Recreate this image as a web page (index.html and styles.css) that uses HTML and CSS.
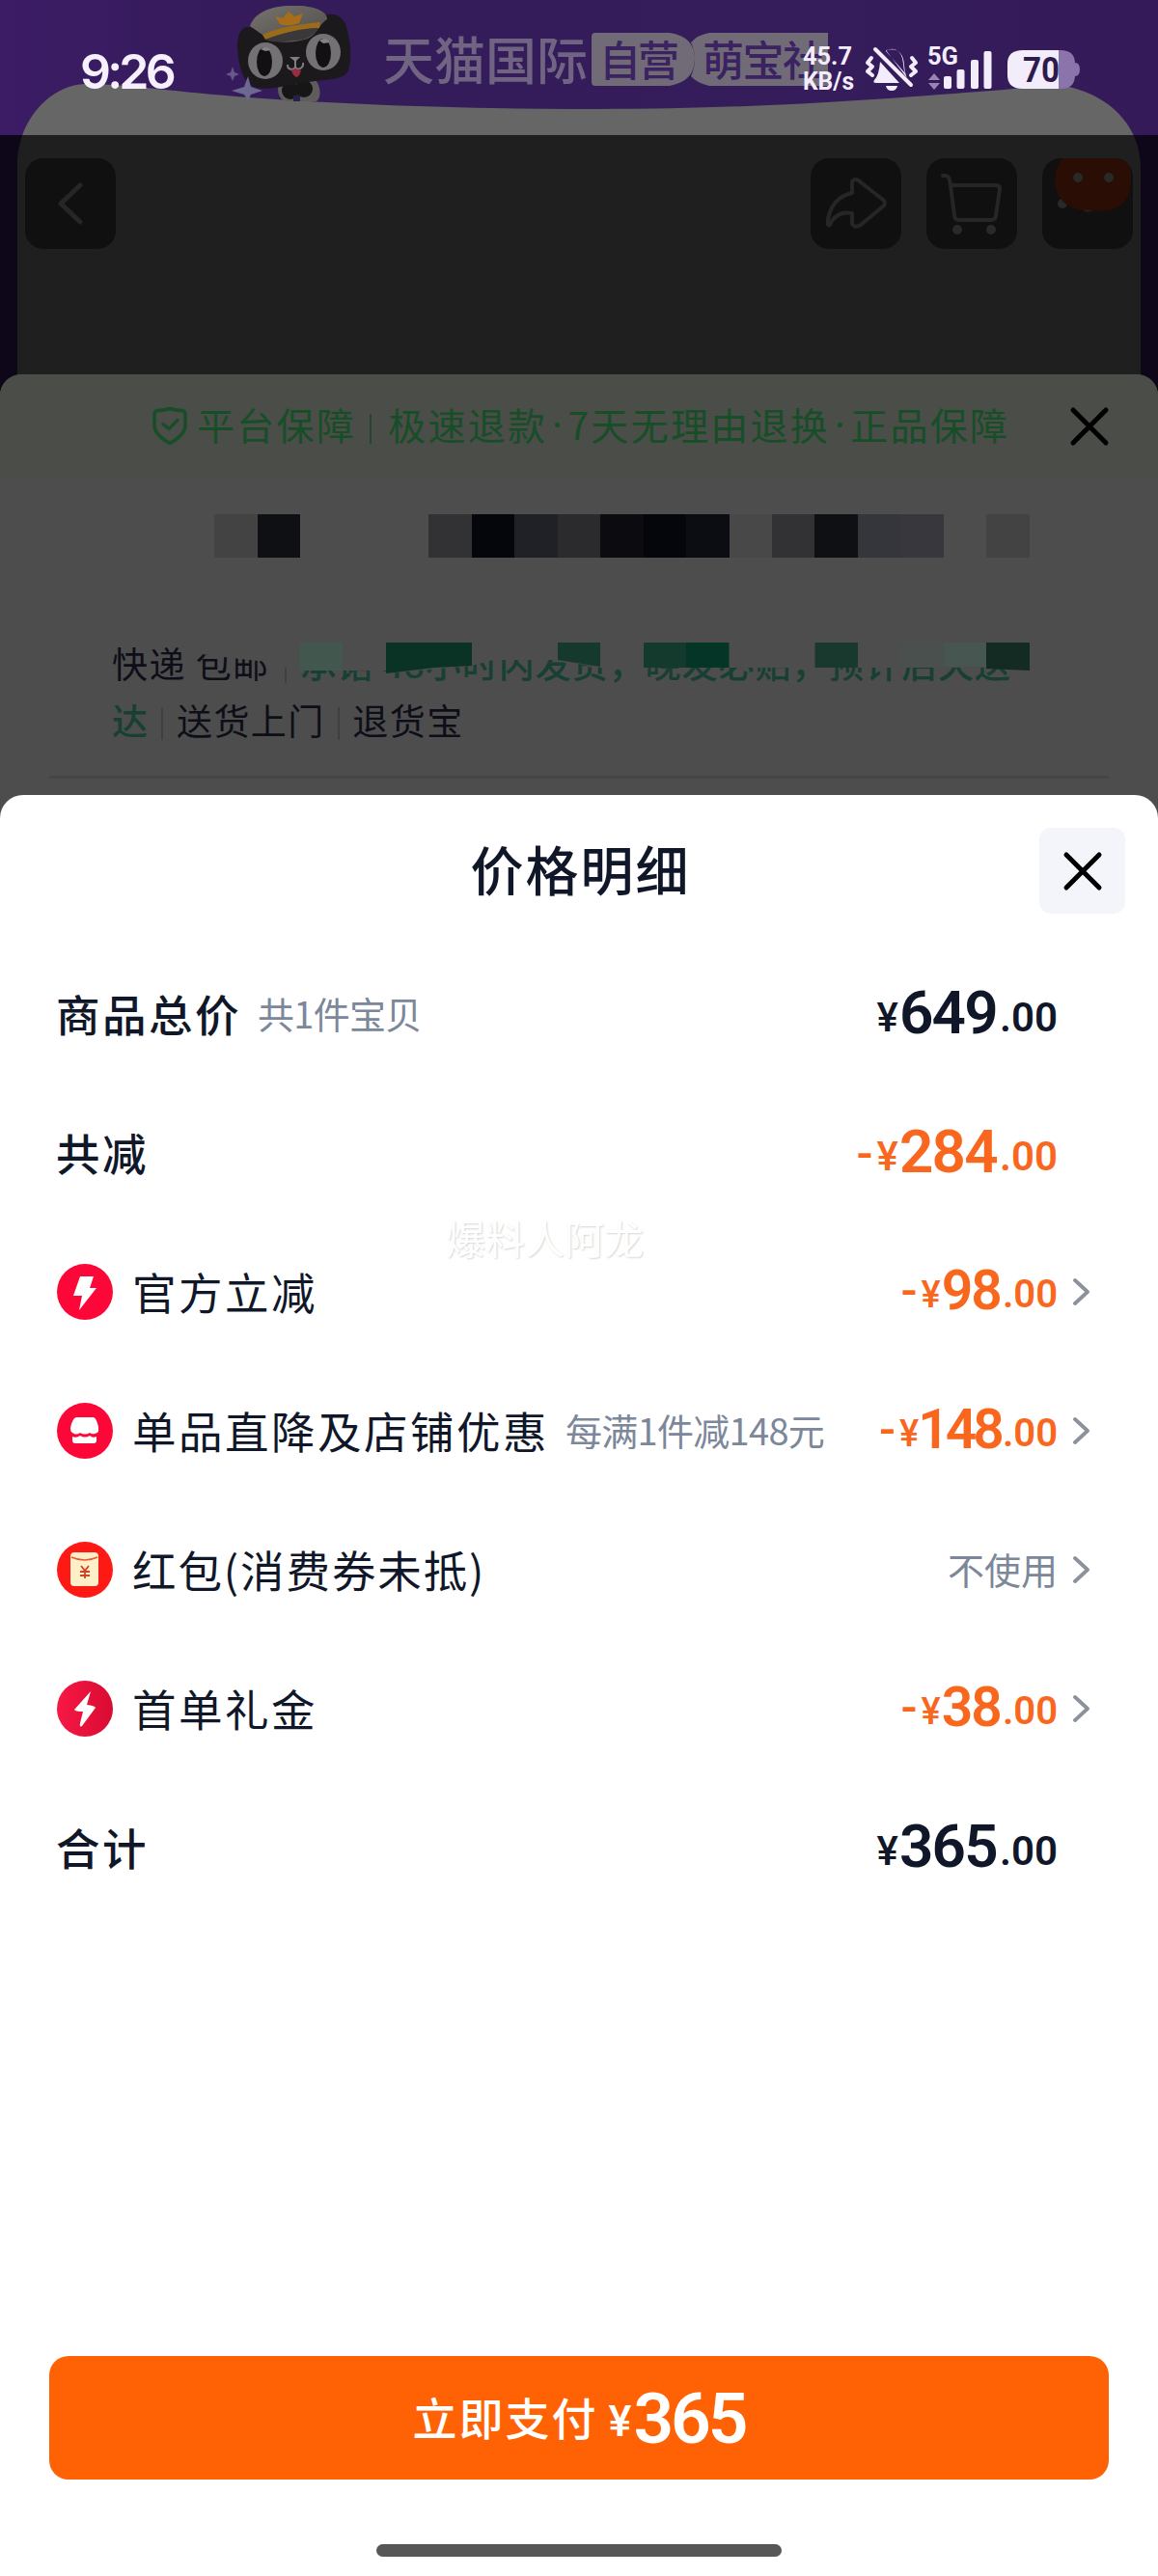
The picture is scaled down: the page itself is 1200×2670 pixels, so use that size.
FILE: index.html
```html
<!DOCTYPE html>
<html lang="zh-CN">
<head>
<meta charset="utf-8">
<meta name="viewport" content="width=1200">
<title>价格明细</title>
<link rel="stylesheet" href="styles.css">
</head>
<body>
<div class="page">
  <header class="hero">
    <svg class="hero-art" viewBox="0 0 1200 420" width="1200" height="420">
      <defs>
        <linearGradient id="purple" x1="0" x2="1"><stop offset="0" stop-color="#3b1c65"/><stop offset=".25" stop-color="#341b59"/><stop offset=".7" stop-color="#351c5b"/><stop offset="1" stop-color="#341a58"/></linearGradient>
        <linearGradient id="hat" x1="0" x2="1" y2="1"><stop offset="0" stop-color="#77736e"/><stop offset="1" stop-color="#4e4b4a"/></linearGradient>
        <clipPath id="top"><rect width="1200" height="140"/></clipPath>
        <clipPath id="low"><rect y="140" width="1200" height="280"/></clipPath>
        <path id="card" d="M18 420V165C20 128 48 89 88 87C130 87 170 94 245 100C350 108 480 113 620 113C790 113 920 102 1040 93C1070 90 1095 88 1108 90C1150 100 1182 130 1182 175V420Z"/>
      </defs>
      <rect width="1200" height="140" fill="url(#purple)"/>
      <rect y="140" width="1200" height="280" fill="#0d0719"/>
      <use href="#card" fill="#666" clip-path="url(#top)"/>
      <use href="#card" fill="#1f1f1f" clip-path="url(#low)"/>
      <g>
        <path d="M290 84C286 92 288 103 296 105H328C334 100 332 88 326 82Z" fill="#5f5d5c"/>
        <circle cx="301" cy="94" r="9" fill="#171617"/><circle cx="315" cy="92" r="9" fill="#171617"/>
        <path d="M304 105V99H311V105Z" fill="#28204a"/>
        <path d="M246 48C246 36 250 27 258 28C266 29 270 36 276 38C296 38 320 32 332 20C340 11 353 14 358 25C364 42 365 65 360 75C354 83 338 82 320 85C300 88 278 94 266 91C250 86 247 65 246 48Z" fill="#1b191b"/>
        <path d="M259 27C264 12 283 5 306 6C324 5 340 12 339 20C330 26 330 34 319 40C304 45 282 46 272 36Z" fill="url(#hat)"/>
        <path d="M272 36C288 28 312 25 332 23L331 29C314 29 292 34 275 41Z" fill="#9b6b17"/>
        <path d="M285 17L293 19L299 12L305 17L314 14L310 24Q299 28 290 25Z" fill="#a86d18"/>
        <path d="M275 41C292 34 314 29 330 29C324 38 315 42 303 42C291 44 281 44 275 41Z" fill="#3a3839"/>
        <ellipse cx="275" cy="63" rx="18" ry="19" fill="#747174"/><ellipse cx="274" cy="64" rx="8" ry="15" fill="#111"/>
        <ellipse cx="335" cy="54" rx="18" ry="19" fill="#747174"/><ellipse cx="335" cy="55" rx="8" ry="15" fill="#111"/>
        <path d="M270 51Q276 46 281 52L275 53ZM331 42Q337 37 342 44L335 45Z" fill="#858285"/>
        <path d="M300 59H311L306 64Z" fill="#817d81"/>
        <path d="M306 62V69M298 67C298 74 306 72 306 69C307 74 315 71 314 65" fill="none" stroke="#817d81" stroke-width="2"/>
        <path d="M302 73Q307 70 312 73Q310 80 307 80Q303 78 302 73Z" fill="#9a2c40"/>
        <path d="M257 79L260 90L272 94L260 98L257 104L253 98L240 94L253 90Z" fill="#6c6990"/>
        <path d="M241 69L243 75L248 77L243 79L241 84L239 79L234 77L239 75Z" fill="#665887"/>
      </g>
      <g class="banner-text">
        <text x="397" y="83" textLength="212" fill="#716482">天猫国际</text>
        <path d="M617 34H694Q720 38 720 61T694 89H617Q613 89 613 85V38Q613 34 617 34Z" fill="#716b78"/>
        <path d="M735 34H858V89H735Q722 86 716 79Q724 61 716 44Q723 36 735 34Z" fill="#716b78"/>
        <text x="621" y="79" textLength="83" fill="#3b2260" font-size="43">自营</text>
        <text x="728" y="79" textLength="126" fill="#3b2260" font-size="43">萌宝社</text>
      </g>
    </svg>
    <div class="status">
      <span class="clock">9:26</span>
      <svg class="signals" viewBox="828 42 290 58" width="290" height="58" fill="#f3edfb">
        <g class="micro"><text x="832" y="67" textLength="51" lengthAdjust="spacingAndGlyphs">45.7</text><text x="832" y="92.500" textLength="53" lengthAdjust="spacingAndGlyphs">KB/s</text><text x="961" y="67" textLength="32" lengthAdjust="spacingAndGlyphs">5G</text></g>
        <path d="M918 52Q936 48 937 68Q938 77 940 81M912 64Q911 78 906 83Q904 86 908 86H932L912 64ZM918 53L938 76Q936 70 936 66Q935 55 929 52Q923 49 918 53ZM918 89H930Q929 94 924 94T918 89Z"/>
        <path d="M907 51L944 88M903 60L899 65L904 69L899 74L904 78M945 60L949 65L944 69L949 74L944 78" fill="none" stroke="#f3edfb" stroke-width="4" stroke-linecap="round" stroke-linejoin="round"/>
        <path d="M962 83L968 76L974 83ZM962 86L968 93L974 86Z" fill="#9985b4"/>
        <rect x="978" y="79" width="8" height="13" rx="2"/><rect x="991.500" y="72" width="8" height="20" rx="2"/><rect x="1006" y="62" width="8" height="30" rx="2"/><rect x="1019.500" y="53" width="8" height="39" rx="2"/>
        <path d="M1059 52H1099Q1114 52 1114 66V78Q1114 92 1099 92H1059ZM1114 65Q1119 65 1119 72T1114 79Z" fill="#8b74ab"/>
        <path d="M1060 52H1097V92H1060Q1044 92 1044 78V66Q1044 52 1060 52Z"/>
        <text class="charge" x="1060" y="84.500" textLength="38" lengthAdjust="spacingAndGlyphs">70</text>
      </svg>
    </div>
    <nav class="nav">
      <span class="tool"><svg viewBox="0 0 94 94"><path d="M57 28L37 47L57 66" stroke-width="5"/></svg></span>
      <span class="tools">
        <span class="tool"><svg viewBox="0 0 94 94"><path d="M43 24Q47 20 52 25L75 43Q79 46 75 50L52 69Q46 73 43 68V57C31 55 24 60 20 69Q17 71 18 63C21 48 30 39 43 36Z"/></svg></span>
        <span class="tool"><svg viewBox="0 0 94 94"><path d="M17 18H20Q24 18 25 28L29 59Q29 64 34 64H67Q72 64 72 59L76 32Q76 28 72 28H25"/><circle class="solid" cx="32" cy="74" r="5"/><circle class="solid" cx="67" cy="74" r="5"/></svg></span>
        <span class="tool"><svg viewBox="0 0 94 94"><circle class="solid" cx="21" cy="47" r="5"/><path class="solid" d="M40 52H55Q48 59 40 52Z"/><path d="M22 0H84Q93 4 92 25Q91 45 76 52Q65 56 46 54Q27 53 20 43Q11 33 14 14Q16 4 22 0Z" fill="#2a0d04" stroke="none"/><circle class="solid" cx="37" cy="20" r="5"/><circle class="solid" cx="69" cy="20" r="5"/></svg></span>
      </span>
    </nav>
  </header>

  <section class="product">
    <div class="promise">
      <svg class="shield" viewBox="0 0 36 40"><path d="M18 2Q10 4 5 4Q2 5 2 8V20Q3 30 18 38Q33 30 34 20V8Q34 5 31 4Q26 4 18 2Z"/><path d="M11 18L17 23L26 14"/></svg>
      <span class="promise-name">平台保障</span><i class="bar"></i>
      <span class="promise-text"><b>极速退款</b><em></em><b>7天无理由退换</b><em></em><b>正品保障</b></span>
      <svg class="x" viewBox="0 0 42 42"><path d="M4 4L38 38M38 4L4 38"/></svg>
    </div>
    <div class="mosaic">
      <i class="m1"></i><i class="m2"></i><i></i><i></i><i></i><i class="m3"></i><i class="m4"></i><i class="m5"></i><i class="m6"></i><i class="m7"></i><i class="m8"></i><i class="m9"></i><i class="m10"></i><i class="m3"></i><i class="m2"></i><i class="m11"></i><i class="m12"></i><i></i><i class="m1"></i>
    </div>
    <div class="delivery">
      <div class="line"><span class="ship">快递 包邮</span><i class="bar low"></i><span class="green late">承诺 48小时内发货，晚发必贴，预计后天送</span></div>
      <div class="line"><span class="green">达</span><i class="bar"></i><span>送货上门</span><i class="bar"></i><span>退货宝</span></div>
      <svg class="cover" viewBox="200 660 880 50" width="880" height="50">
        <path fill="#4d4d4d" d="M200 660H1080V692H622L578 684H511L489 690L400 698V695H311V692H290L276 686L240 682L200 677Z"/>
        <path fill="#42584f" d="M311 666H355V695H311Z"/>
        <path fill="#0a3326" d="M400 666H489V690L450 692L400 698Z"/>
        <path fill="#15392d" d="M578 666H622V691L578 684Z"/>
        <path fill="#143a2e" d="M667 666H711V692H667Z"/>
        <path fill="#043527" d="M711 666H755.500V692H711Z"/>
        <path fill="#19382e" d="M844.500 666H889V692H844.500Z"/>
        <path fill="#4a504e" d="M933 666H978V692H933Z"/>
        <path fill="#475650" d="M978 666H1022V691H978Z"/>
        <path fill="#142b23" d="M1022 666H1067V695L1022 693Z"/>
      </svg>
    </div>
  </section>

  <main class="sheet">
    <div class="sheet-head"><h1>价格明细</h1><button class="close" aria-label="关闭"><svg class="x" viewBox="0 0 42 42"><path d="M4 4L38 38M38 4L4 38"/></svg></button></div>
    <span class="mark">爆料人阿龙</span>
    <ul class="rows">
      <li class="row total"><span class="label">商品总价</span><span class="note">共1件宝贝</span><span class="price"><small>¥</small><strong>649</strong><small>.00</small></span></li>
      <li class="row total off"><span class="label">共减</span><span class="price"><s>-</s><small>¥</small><strong>284</strong><small>.00</small></span></li>
      <li class="row off"><svg class="icon" viewBox="0 0 58 58"><circle cx="29" cy="29" r="29" fill="#fb0838"/><path d="M24 13H38L34 25H41L23 48L26 33H17Z" fill="#fff"/></svg><span class="label">官方立减</span><span class="price"><s>-</s><small>¥</small><strong>98</strong><small>.00</small></span><svg class="chev" viewBox="0 0 18 30"><path d="M2 3L15 15L2 27"/></svg></li>
      <li class="row off"><svg class="icon" viewBox="0 0 58 58"><circle cx="29" cy="29" r="29" fill="#fb0838"/><path d="M20 15H38Q41 16 43 25V29Q43 31 39 32Q36 33 34 31Q29 34 24 31Q20 34 16 31Q14 30 14 26Q16 16 20 15ZM16 35Q20 37 24 34Q29 37 34 34Q37 37 41 35V39Q41 42 38 42H19Q16 42 16 39Z" fill="#fff"/></svg><span class="label">单品直降及店铺优惠</span><span class="note">每满1件减148元</span><span class="price tight"><s>-</s><small>¥</small><strong>148</strong><small>.00</small></span><svg class="chev" viewBox="0 0 18 30"><path d="M2 3L15 15L2 27"/></svg></li>
      <li class="row"><svg class="icon" viewBox="0 0 58 58"><circle cx="29" cy="29" r="29" fill="#fd1a14"/><rect x="14" y="11" width="29" height="35" rx="4" fill="#ffefc9"/><path d="M15 16Q29 22 42 16" fill="none" stroke="#e8592e" stroke-width="1.500"/><path d="M25 25L29 30L33 25M29 30V38M24 31H34M24 35H34" fill="none" stroke="#ce4520" stroke-width="1.800"/></svg><span class="label coupon">红包(消费券未抵)</span><span class="unused">不使用</span><svg class="chev" viewBox="0 0 18 30"><path d="M2 3L15 15L2 27"/></svg></li>
      <li class="row off"><svg class="icon" viewBox="0 0 58 58"><defs><linearGradient id="gift" x2="1"><stop stop-color="#f71845"/><stop offset="1" stop-color="#d90b32"/></linearGradient></defs><circle cx="29" cy="29" r="29" fill="url(#gift)"/><path d="M35 11L31 25Q39 26 40 28L26 47Q23 49 24 44L27 32Q19 32 18 30Z" fill="#fff"/></svg><span class="label">首单礼金</span><span class="price"><s>-</s><small>¥</small><strong>38</strong><small>.00</small></span><svg class="chev" viewBox="0 0 18 30"><path d="M2 3L15 15L2 27"/></svg></li>
      <li class="row total"><span class="label">合计</span><span class="price"><small>¥</small><strong>365</strong><small>.00</small></span></li>
    </ul>
    <button class="pay"><span>立即支付</span><small>¥</small><strong>365</strong></button>
    <i class="home"></i>
  </main>
</div>
</body>
</html>
```
FILE: styles.css
```css
* { box-sizing: border-box; }
body { margin: 0; background: #4d4d4d; font-family: "Noto Sans CJK SC", sans-serif; }
i, em, s { font-style: normal; text-decoration: none; }
.page { width: 1200px; height: 2670px; overflow: hidden; display: flex; flex-direction: column; }

.hero { position: relative; height: 388px; }
.hero-art { position: absolute; left: 0; top: 0; }
.banner-text { font-weight: 500; font-size: 53px; }
.status { position: relative; height: 140px; padding: 0 82px 0 83px; display: flex; justify-content: space-between; align-items: flex-start; }
.clock { font: 600 50px/58px Inter, sans-serif; color: #f6effc; letter-spacing: -3.800px; margin-top: 45px; }
.signals { margin-top: 42px; overflow: visible; }
.micro { font: 700 26px Roboto, sans-serif; }
.charge { font: 700 36px Roboto, sans-serif; fill: #2e1b4d; }
.nav { position: relative; display: flex; justify-content: space-between; padding: 24px 26px 0; }
.tools { display: flex; gap: 26px; }
.tool { width: 94px; height: 94px; border-radius: 19px; background: #101010; overflow: hidden; }
.tool svg { display: block; width: 94px; height: 94px; fill: none; stroke: #262626; stroke-width: 4; stroke-linecap: round; stroke-linejoin: round; }
.tool .solid { fill: #292929; stroke: none; }

.product { position: relative; flex: none; height: 454px; margin-bottom: -18px; border-radius: 22px 22px 0 0; background: #4d4d4d; overflow: hidden; }
.promise { height: 109px; padding: 0 50px 2px 158px; background: #4a4d48; display: flex; align-items: center; color: #174e28; font-size: 39px; letter-spacing: 2.300px; line-height: 58px; }
.promise b { font-weight: 400; }
.promise em { width: 5px; height: 5px; margin: 3px 8px 0; border-radius: 3px; background: #174e28; }
.promise-name, .promise-text { margin-bottom: 5px; }
.shield { width: 36px; height: 43px; margin-right: 10px; fill: none; stroke: #174e28; stroke-width: 3.500; stroke-linecap: round; stroke-linejoin: round; }
.promise .bar { width: 2px; height: 31px; margin: 5px 17px 0 14px; background: #22492e; }
.promise-text { display: flex; align-items: center; white-space: nowrap; }
.x { width: 42px; height: 42px; fill: none; stroke: #000; stroke-width: 5; stroke-linecap: round; }
.promise .x { margin-left: auto; }
.mosaic { display: grid; grid-template-columns: repeat(19, 44.450px); height: 45px; margin: 36px 0 0 222.300px; }
.m1 { background: #434343; } .m2 { background: #0f1014; } .m3 { background: #323235; } .m4 { background: #05060b; }
.m5 { background: #202126; } .m6 { background: #2b2b2e; } .m7 { background: #0c0b10; } .m8 { background: #05060c; }
.m9 { background: #0c0d13; } .m10 { background: #484848; } .m11 { background: #34363c; } .m12 { background: #38373d; }
.delivery { position: relative; margin: 80px 51px 0; padding: 0 0 28px 65px; border-bottom: 3px solid #454545; color: #0d0e17; font-size: 37px; letter-spacing: 1.450px; }
.line { height: 59px; line-height: 59px; display: flex; align-items: center; white-space: nowrap; }
.delivery .bar { width: 2px; height: 34px; margin: 6px 13.500px 0 13px; background: #3f3f3f; }
.delivery .low { margin: 6px 15px 0; }
.green { color: #173f33; font-weight: 500; }
.late { letter-spacing: .950px; }
.cover { position: absolute; left: 149px; top: 2px; }

.sheet { position: relative; flex: 1; background: #fff; border-radius: 24px 24px 0 0; color: #101729; display: flex; flex-direction: column; align-items: center; }
.sheet-head { width: 100%; height: 155px; padding: 34px 34px 0; display: grid; grid-template-columns: 89px 1fr 89px; }
h1 { margin: 0 0 0 3px; font-size: 55px; line-height: 82px; font-weight: 500; letter-spacing: 2px; text-align: center; }
.sheet-head h1 { grid-column: 2; }
.close { width: 89px; height: 89px; border: 0; padding: 0; border-radius: 12px; background: #f4f5fa; display: grid; place-items: center; }
.mark { position: absolute; left: 462px; top: 428px; font-size: 41px; line-height: 60px; color: #fff; text-shadow: 1px 1px 2px #d5d5d5; }
.rows { list-style: none; width: 100%; margin: 0; padding: 0 70px 0 59px; }
.row { height: 144px; display: flex; align-items: center; }
.label { margin: 0 0 3px -1px; font-size: 45.500px; letter-spacing: 2.500px; line-height: 60px; white-space: nowrap; }
.coupon { letter-spacing: 1.900px; }
.icon { width: 58px; height: 58px; margin-right: 21px; }
.total .label { font-weight: 500; }
.note, .unused { color: #7c889a; font-size: 38px; line-height: 56px; white-space: nowrap; margin-bottom: 2px; }
.note { margin-left: 17px; letter-spacing: -.700px; }
.price { margin-left: auto; display: flex; align-items: baseline; font-family: Roboto, sans-serif; line-height: 70px; }
.price strong { position: relative; top: 2px; font-size: 57px; font-weight: 600; letter-spacing: -2px; margin: 0 2px 0 1px; }
.price small { font-size: 40px; font-weight: 600; }
.price small:first-of-type { font-weight: 500; font-size: 38px; }
.price s { font-size: 50px; font-weight: 500; margin-right: 4px; }
.tight strong { letter-spacing: -4px; margin-left: -1px; }
.total .price { margin-right: 34px; }
.total .price strong { font-size: 62px; letter-spacing: -1.700px; margin-right: 3px; }
.total .price small { font-size: 42px; }
.off .price { color: #f9671e; }
.unused { margin-left: auto; }
.chev { width: 18px; height: 30px; margin-left: 16px; fill: none; stroke: #8c929c; stroke-width: 3.800; stroke-linecap: round; stroke-linejoin: round; }
.pay { width: 1098px; height: 128px; margin-top: auto; border: 0; border-radius: 20px; background: #ff6205; color: #fff; display: flex; align-items: center; justify-content: center; font: 500 46px/66px "Noto Sans CJK SC", sans-serif; letter-spacing: 2px; }
.pay span { margin-bottom: 4px; }
.pay small { font: 500 45px/60px Roboto, sans-serif; margin: 8px 2px 0 11px; letter-spacing: 0; }
.pay strong { font: 600 73px/80px Roboto, sans-serif; letter-spacing: -3px; margin-top: 2px; }
.home { width: 420px; height: 13px; margin: 67px 0 20px; border-radius: 7px; background: #575757; }
```
